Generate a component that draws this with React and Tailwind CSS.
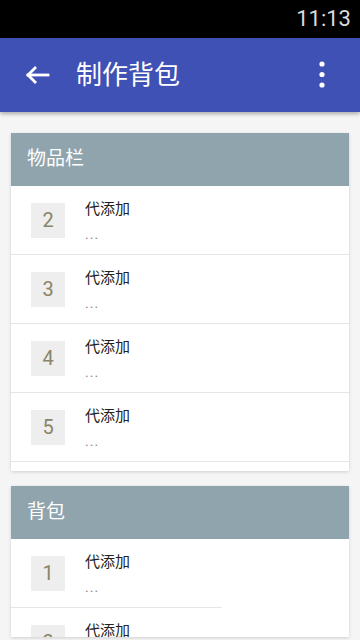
import React from 'react';

const cjk = { fontFamily: '"Roboto", "Noto Sans CJK SC", sans-serif' };

const slots = [2, 3, 4, 5];

function BackArrow() {
  return (
    <svg width="25" height="20" viewBox="0 0 25 20" fill="none" stroke="white" strokeWidth="2.8" strokeLinecap="square">
      <path d="M23 10H3" />
      <path d="M11 2L3 10L11 18" strokeLinecap="butt" />
    </svg>
  );
}

function MoreDots() {
  return (
    <svg width="6" height="28" viewBox="0 0 6 28" fill="white">
      <circle cx="3" cy="3" r="2.6" />
      <circle cx="3" cy="13.5" r="2.6" />
      <circle cx="3" cy="24" r="2.6" />
    </svg>
  );
}

function SlotRow({ num, divider = 'full' }) {
  return (
    <div>
      <div className="flex h-[68px] items-center pl-[20px]">
        <div className="flex h-[35px] w-[34px] items-center justify-center bg-[#eeeeee] text-[20px] text-[#8a8468]">
          {num}
        </div>
        <div className="ml-[20px] flex flex-col pt-[2px]">
          <span className="text-[15px] leading-[20px] text-[#222222]">代添加</span>
          <span className="mt-[6px] text-[14px] leading-[18px] tracking-[1px] text-[#888888]">...</span>
        </div>
      </div>
      {divider === 'full' && <div className="h-px bg-[#e6e6e6]" />}
      {divider === 'partial' && <div className="h-px w-[211px] bg-[#e6e6e6]" />}
    </div>
  );
}

function CardHeader({ title }) {
  return (
    <div className="flex h-[53px] items-center bg-[#90a4ae] pl-[16px] text-[19px] text-white">
      {title}
    </div>
  );
}

export default function App() {
  return (
    <div className="flex h-[640px] w-[360px] flex-col overflow-hidden bg-[#f5f5f5]" style={cjk}>
      <div className="flex h-[38px] items-center justify-end bg-black pr-[9px]">
        <span className="text-[22px] leading-none text-[#dcdcdc]" style={{ fontFamily: 'Roboto, sans-serif' }}>11:13</span>
      </div>
      <div className="relative z-10 flex h-[74px] items-center bg-[#3f51b5] shadow-[0_2px_4px_rgba(0,0,0,0.3)]">
        <div className="ml-[25px] flex items-center">
          <BackArrow />
        </div>
        <span className="ml-[26px] text-[26px] text-white">制作背包</span>
        <div className="ml-auto mr-[35px] flex items-center">
          <MoreDots />
        </div>
      </div>

      <div className="flex flex-col px-[11px] pt-[21px]">
        <div className="bg-white pb-[9px] shadow-[0_1px_3px_rgba(0,0,0,0.16)]">
          <CardHeader title="物品栏" />
          {slots.map(n => (
            <SlotRow key={n} num={n} />
          ))}
        </div>

        <div className="mt-[15px] h-[151px] overflow-hidden bg-white shadow-[0_1px_3px_rgba(0,0,0,0.16)]">
          <CardHeader title="背包" />
          <SlotRow num={1} divider="partial" />
          <SlotRow num={2} divider="none" />
        </div>
      </div>
    </div>
  );
}
